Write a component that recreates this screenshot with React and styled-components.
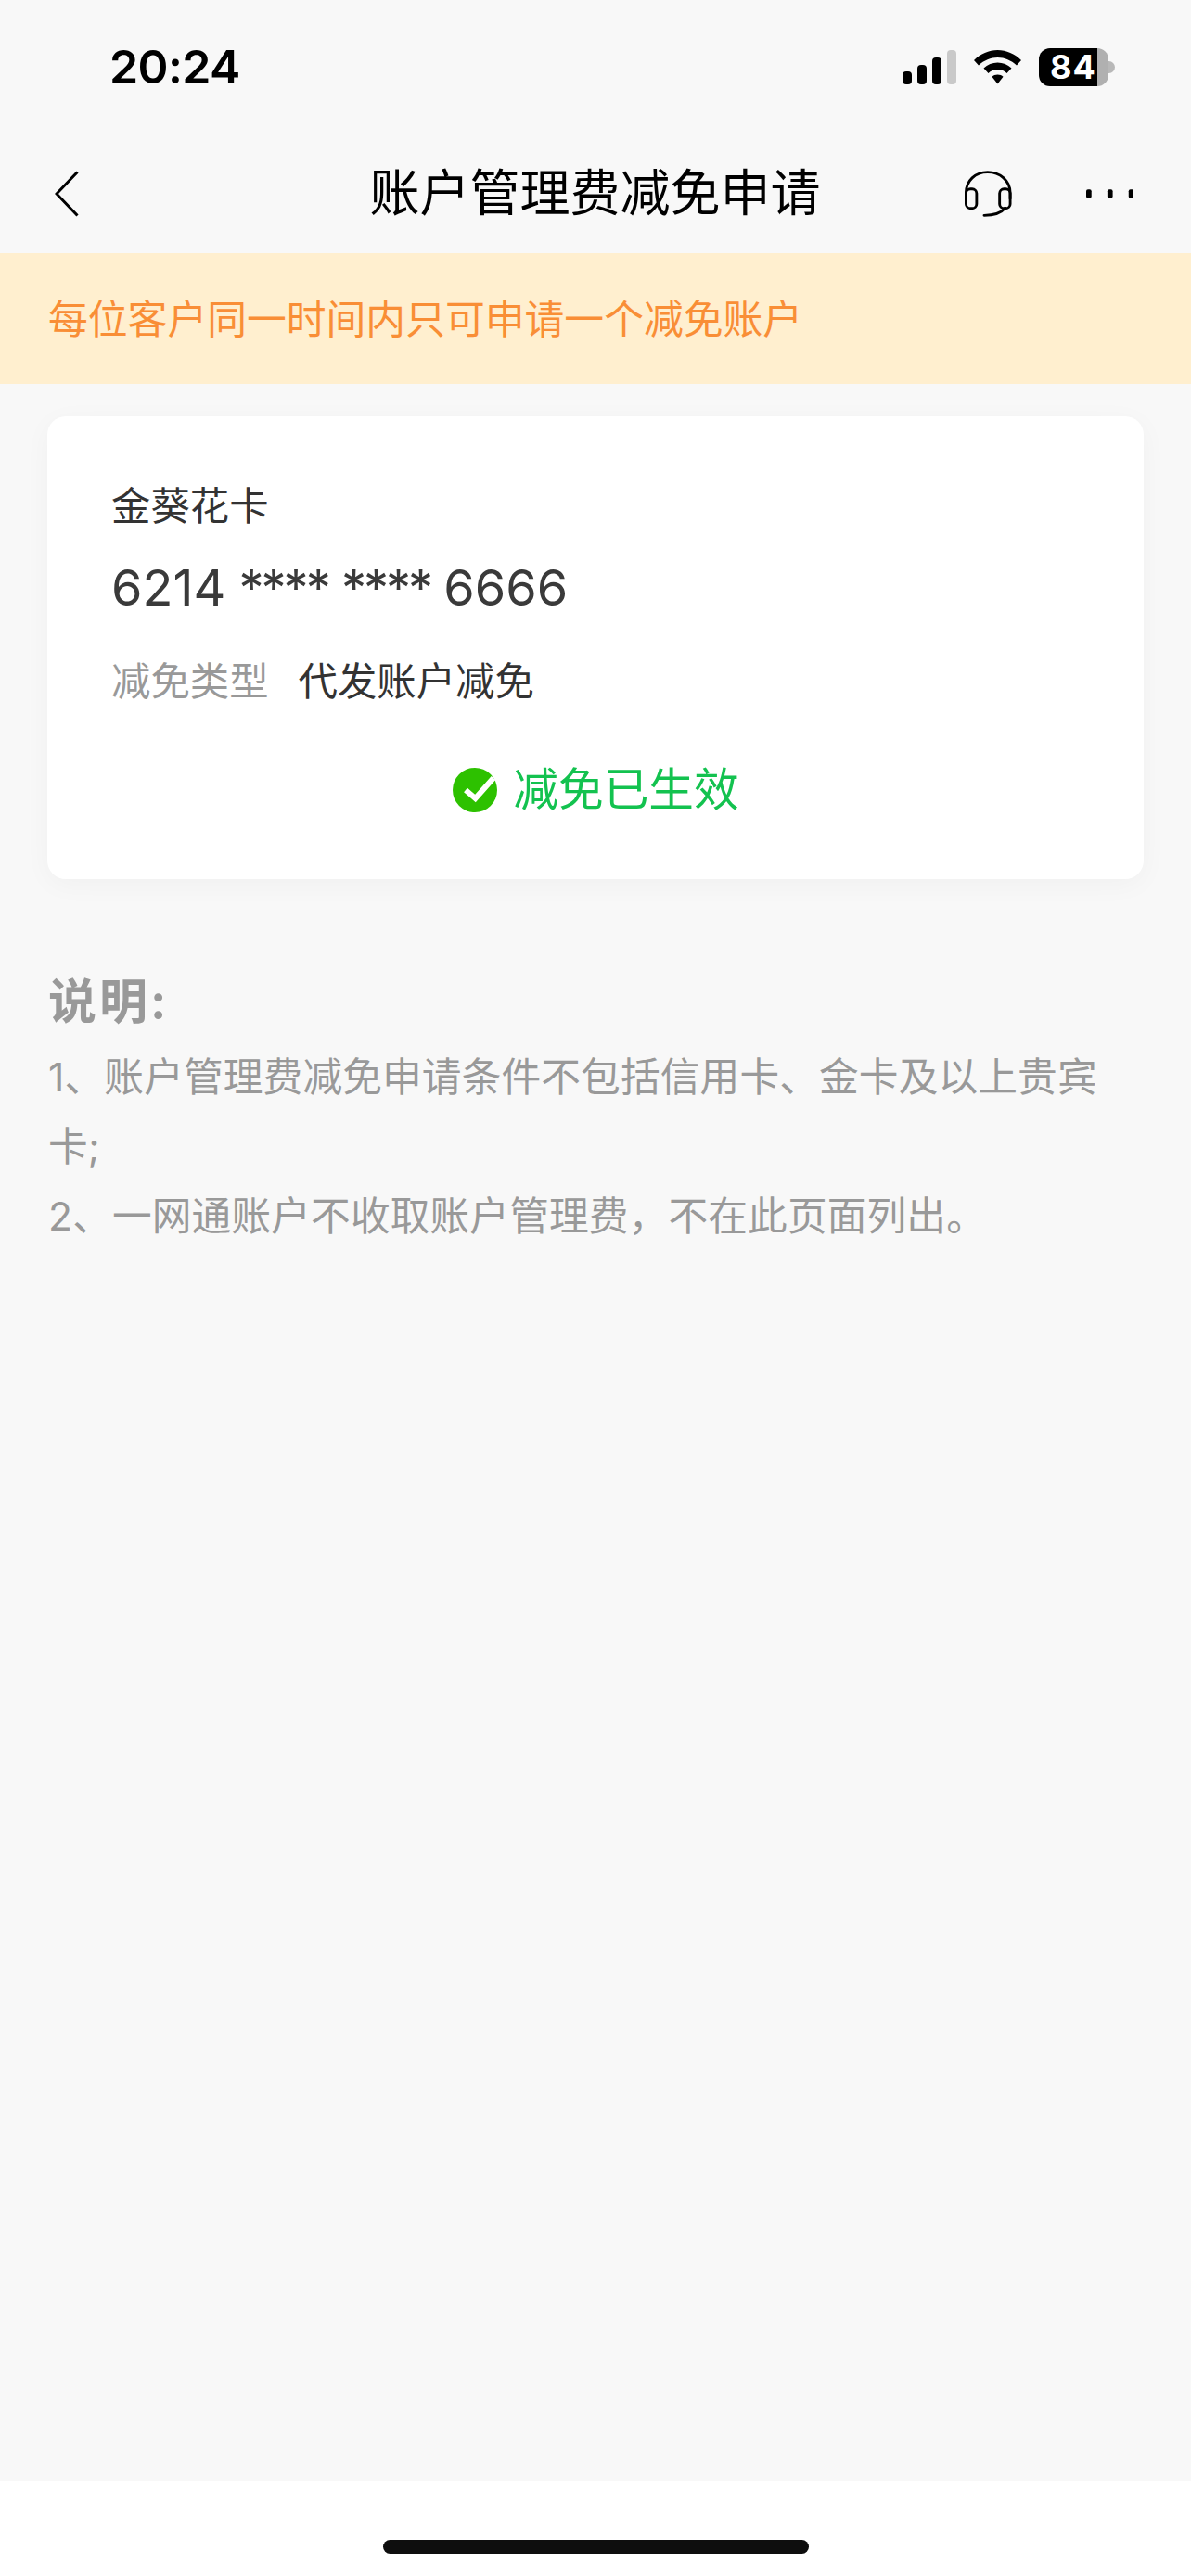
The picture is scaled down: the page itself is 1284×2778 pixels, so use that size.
import React from "react";
import styled, { createGlobalStyle } from "styled-components";

const cjk = `Inter, "Noto Sans CJK SC", sans-serif`;

const GlobalStyle = createGlobalStyle`
  html, body {
    margin: 0;
    padding: 0;
    background: #f8f8f8;
  }
  * {
    box-sizing: border-box;
  }
`;

const Screen = styled.div`
  width: 1284px;
  height: 2778px;
  display: flex;
  flex-direction: column;
  background: #f8f8f8;
  font-family: ${cjk};
  overflow: hidden;
`;

const StatusBar = styled.div`
  height: 144px;
  display: flex;
  align-items: center;
  justify-content: space-between;
  padding: 0 89px 0 118px;
`;

const Time = styled.div`
  font-size: 50px;
  font-weight: 600;
  letter-spacing: -0.6px;
  color: #000;
`;

const StatusIcons = styled.div`
  display: flex;
  align-items: center;
  gap: 19px;
`;

const Battery = styled.div`
  position: relative;
  width: 75px;
  height: 41px;
  border-radius: 12px;
  display: flex;
  align-items: center;
  padding-left: 12px;
  font-size: 36px;
  font-weight: 700;
  letter-spacing: 1px;
  color: #fff;
  background: linear-gradient(
    to right,
    #000 ${(p) => p.$level}%,
    #b0b0b0 ${(p) => p.$level}%
  );

  &::after {
    content: "";
    position: absolute;
    right: -7px;
    top: 14px;
    width: 7px;
    height: 13px;
    border-radius: 0 7px 7px 0;
    background: #b8b8b8;
  }
`;

const NavBar = styled.div`
  height: 129px;
  display: flex;
  align-items: center;
  justify-content: space-between;
  padding: 0 62px 0 59px;
`;

const NavSide = styled.div`
  width: 182px;
  display: flex;
  align-items: center;
  justify-content: ${(p) => (p.$end ? "flex-end" : "flex-start")};
  gap: 80px;
`;

const Title = styled.div`
  font-size: 54px;
  font-weight: 400;
  color: #000;
  white-space: nowrap;
  margin: 0 0 8px 2px;
`;

const Notice = styled.div`
  height: 141px;
  display: flex;
  align-items: center;
  padding: 0 0 5px 52px;
  background: #ffefcf;
  color: #f98e36;
  font-size: 42.8px;
`;

const Card = styled.div`
  margin: 35px 51px 0;
  height: 499px;
  padding: 67px 69px 0;
  background: #fff;
  border-radius: 20px;
  box-shadow: 0 6px 30px rgba(0, 0, 0, 0.035);
`;

const CardName = styled.div`
  font-size: 42.4px;
  line-height: 60px;
  color: #333;
`;

const CardNumber = styled.div`
  margin-top: 26px;
  font-size: 54px;
  line-height: 64px;
  word-spacing: -1px;
  color: #3a3a3a;
`;

const Masked = styled.span`
  letter-spacing: -3px;
`;

const TypeRow = styled.div`
  margin-top: 39px;
  display: flex;
  gap: 32px;
  font-size: 42.4px;
  line-height: 60px;
`;

const TypeLabel = styled.span`
  color: #999;
`;

const TypeValue = styled.span`
  color: #333;
`;

const EffectRow = styled.div`
  margin-top: 54px;
  display: flex;
  align-items: center;
  justify-content: center;
  gap: 18px;
  font-size: 48.6px;
  line-height: 66px;
  color: #13c24f;
`;

const Notes = styled.div`
  padding: 0 52px;
  margin-top: 98px;
  color: #999;
`;

const NotesTitle = styled.div`
  font-size: 52px;
  font-weight: 700;
  line-height: 70px;
  letter-spacing: 3px;
  margin-bottom: 8px;
`;

const NotesLine = styled.div`
  font-size: 42.7px;
  line-height: 75px;
  letter-spacing: 0.13px;
`;

const Spacer = styled.div`
  flex: 1;
`;

const HomeArea = styled.div`
  height: 102px;
  background: #fff;
  display: flex;
  justify-content: center;
  padding-top: 63px;
`;

const HomeBar = styled.div`
  width: 459px;
  height: 15px;
  border-radius: 8px;
  background: #0e0e0e;
`;

const SignalIcon = () => (
  <svg width="58" height="37" viewBox="0 0 58 37">
    <rect x="0" y="23" width="10" height="14" rx="4" fill="#000" />
    <rect x="16" y="16" width="10" height="21" rx="4" fill="#000" />
    <rect x="32" y="8" width="10" height="29" rx="4" fill="#000" />
    <rect x="48" y="0" width="10" height="37" rx="4" fill="#c9c9c9" />
  </svg>
);

const WifiIcon = () => (
  <svg width="51" height="37" viewBox="0 0 51 37">
    <path
      fill="#000"
      d="M25.5 0C35 0 44 4 51 11L46 16.5C40 11 33 8 25.5 8C18 8 11 11 5 16.5L0 11C7 4 16 0 25.5 0Z"
    />
    <path
      fill="#000"
      d="M25.5 13.5C31 13.5 36.5 15.6 40.5 19.5L35.5 25C33 22.5 29.5 21 25.5 21C21.5 21 18 22.5 15.5 25L10.5 19.5C14.5 15.6 20 13.5 25.5 13.5Z"
    />
    <path
      fill="#000"
      d="M25.5 26.5C28 26.5 30 27.3 31.5 28.8L25.5 36.5L19.5 28.8C21 27.3 23 26.5 25.5 26.5Z"
    />
  </svg>
);

const BackIcon = () => (
  <svg width="26" height="50" viewBox="0 0 26 50" fill="none">
    <path d="M24.5 1.5L2 25L24.5 48.5" stroke="#000" strokeWidth="3" />
  </svg>
);

const HeadsetIcon = () => (
  <svg width="53" height="52" viewBox="0 0 53 52" fill="none" stroke="#000" strokeWidth="3">
    <path d="M1.5 32V25C1.5 11 12 1.5 26 1.5S51.5 11 51.5 25V32" />
    <rect x="1.5" y="20.5" width="12" height="22" rx="5" />
    <rect x="39.5" y="20.5" width="12" height="22" rx="5" />
    <path d="M22 50.5C33 50.5 41 48 46 42" strokeLinecap="round" />
  </svg>
);

const MoreIcon = () => (
  <svg width="54" height="10" viewBox="0 0 54 10">
    <rect x="0" y="0" width="6" height="10" rx="2" fill="#000" />
    <rect x="24" y="0" width="6" height="10" rx="2" fill="#000" />
    <rect x="48" y="0" width="6" height="10" rx="2" fill="#000" />
  </svg>
);

const CheckIcon = () => (
  <svg width="48" height="48" viewBox="0 0 48 48" fill="none">
    <circle cx="24" cy="24" r="24" fill="#2dc100" />
    <path d="M14 24L24.5 33L44 11" stroke="#fff" strokeWidth="6" />
  </svg>
);

const App = () => (
  <Screen>
    <GlobalStyle />
    <StatusBar>
      <Time>20:24</Time>
      <StatusIcons>
        <SignalIcon />
        <WifiIcon />
        <Battery $level={84}>84</Battery>
      </StatusIcons>
    </StatusBar>
    <NavBar>
      <NavSide>
        <BackIcon />
      </NavSide>
      <Title>账户管理费减免申请</Title>
      <NavSide $end>
        <HeadsetIcon />
        <MoreIcon />
      </NavSide>
    </NavBar>
    <Notice>每位客户同一时间内只可申请一个减免账户</Notice>
    <Card>
      <CardName>金葵花卡</CardName>
      <CardNumber>
        6214 <Masked>****</Masked> <Masked>****</Masked> 6666
      </CardNumber>
      <TypeRow>
        <TypeLabel>减免类型</TypeLabel>
        <TypeValue>代发账户减免</TypeValue>
      </TypeRow>
      <EffectRow>
        <CheckIcon />
        减免已生效
      </EffectRow>
    </Card>
    <Notes>
      <NotesTitle>说明:</NotesTitle>
      <NotesLine>1、账户管理费减免申请条件不包括信用卡、金卡及以上贵宾卡;</NotesLine>
      <NotesLine>{"2、一网通账户不收取账户管理费\uFF0C不在此页面列出。"}</NotesLine>
    </Notes>
    <Spacer />
    <HomeArea>
      <HomeBar />
    </HomeArea>
  </Screen>
);

export default App;
